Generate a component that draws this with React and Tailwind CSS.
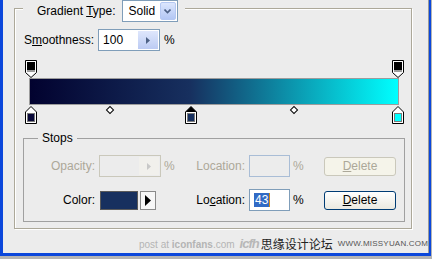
import React from 'react';

const stops = [
    { pos: 0, color: '#0a0a3a' },
    { pos: 43.6, color: '#17305f', selected: true },
    { pos: 100, color: '#00ffff' },
];
const opacityStops = [0, 100];
const midpoints = [21.7, 71.9];

// stop center relative to the editor box
const centerOf = (pct) => 6.5 + (pct / 100) * 367;

function TopStop() {
    return (
        <svg width="12" height="18" viewBox="0 0 12 18">
            <path d="M0.5 0.5H11.5V12.5L6 17.5L0.5 12.5Z" fill="#fff" stroke="#000" />
            <rect x="2" y="2" width="8" height="8" fill="#000" />
            <rect x="2" y="10" width="8" height="2" fill="#9c9c9c" />
        </svg>
    );
}

function BottomStop({ color, selected }) {
    return (
        <svg width="12" height="18" viewBox="0 0 12 18">
            <path d="M6 0.5L11.5 6V17.5H0.5V6Z" fill="#fff" stroke="#000" />
            {selected && <path d="M6 0.5L11.5 6H0.5Z" fill="#000" />}
            <rect x="2.5" y="7.5" width="7" height="8" fill={color} stroke="#7a7a7a" />
        </svg>
    );
}

function Stepper({ disabled }) {
    return (
        <div className={`w-[20px] h-[18px] flex items-center justify-center ${disabled ? 'bg-[#f1f0ec]' : 'bg-gradient-to-b from-[#dfe7fc] to-[#bccbf3]'}`}>
            <svg width="4" height="7" viewBox="0 0 4 7">
                <path d="M0 0L4 3.5L0 7Z" fill={disabled ? '#c8c8c8' : '#4d6185'} />
            </svg>
        </div>
    );
}

function DeleteButton({ disabled }) {
    return (
        <button
            className={`ml-[11px] w-[72px] h-[19px] rounded-[3px] border text-[12px] leading-none flex items-center justify-center
                ${disabled ? 'border-[#cac8bb] bg-[#f5f4ea] text-[#aca899]' : 'border-[#003c74] bg-gradient-to-b from-white to-[#ebe9e0] text-black'}`}
        >
            <span><span className="underline">D</span>elete</span>
        </button>
    );
}

export default function App() {
    return (
        <div className="w-[432px] h-[259px] bg-[#b4b4b4] overflow-hidden font-['Liberation_Sans',sans-serif] text-[12px] text-black">
            <div className="w-[431px] h-[256px] flex border-l-[3px] border-r-[5px] border-b-[3px] border-[#0b47db]">
                <div className="flex-1 bg-[#ececec] border-r border-[#9a9a9a] flex flex-col">

                    {/* Gradient group */}
                    <div className="ml-[11px] mt-[8px] w-[398px] h-[221px] border border-[#aca899] shadow-[inset_1px_1px_0_#fff,1px_1px_0_#fff] flex flex-col">
                        <div className="-mt-[9px] ml-[8px] self-start h-[22px] bg-[#ececec] pl-[14px] pr-[7px] flex items-center">
                            <span>Gradient <span className="underline">T</span>ype:</span>
                            <div className="ml-[6px] w-[56px] h-[22px] border border-[#7f9db9] bg-white flex items-center justify-between pl-[6px] pr-[1px]">
                                <span>Solid</span>
                                <div className="w-[16px] h-[18px] rounded-[2px] border border-[#b5c8f2] bg-gradient-to-b from-[#dce6fd] to-[#b3c7f4] flex items-center justify-center">
                                    <svg width="7" height="5" viewBox="0 0 7 5">
                                        <path d="M0.5 0.5L3.5 3.5L6.5 0.5" fill="none" stroke="#4d6185" strokeWidth="1.6" />
                                    </svg>
                                </div>
                            </div>
                        </div>

                        <div className="mt-[7px] pl-[9px] flex items-center h-[22px]">
                            <span>S<span className="underline">m</span>oothness:</span>
                            <div className="ml-[4px] w-[62px] h-[22px] border border-[#7f9db9] bg-white flex items-center justify-between pl-[4px] pr-[1px]">
                                <span>100</span>
                                <Stepper />
                            </div>
                            <span className="ml-[4px]">%</span>
                        </div>

                        {/* Gradient editor */}
                        <div className="relative mt-[9px] ml-[9px] w-[381px] h-[64px]">
                            {opacityStops.map((p) => (
                                <div key={p} className="absolute top-0" style={{ left: centerOf(p) - 6 }}>
                                    <TopStop />
                                </div>
                            ))}
                            <div className="mt-[18px] ml-[5px] w-[370px] h-[27px] border border-[#9c9c9c] bg-[linear-gradient(to_right,#02022f_0%,#17305f_43.6%,#00ffff_100%)]" />
                            {midpoints.map((p) => (
                                <div
                                    key={p}
                                    className="absolute top-[47px] w-[6px] h-[6px] rotate-45 border border-black bg-white"
                                    style={{ left: centerOf(p) - 3 }}
                                />
                            ))}
                            {stops.map((s) => (
                                <div key={s.pos} className="absolute top-[46px]" style={{ left: centerOf(s.pos) - 6 }}>
                                    <BottomStop color={s.color} selected={s.selected} />
                                </div>
                            ))}
                        </div>

                        {/* Stops group */}
                        <div className="mt-[14px] ml-[8px] w-[382px] h-[84px] border border-[#a0a0a0] flex flex-col">
                            <div className="-mt-[8px] ml-[14px] self-start px-[4px] h-[14px] leading-[14px] bg-[#ececec]">Stops</div>

                            <div className="mt-[10px] h-[22px] flex items-center text-[#aca899]">
                                <span className="w-[71px] text-right">Opacity:</span>
                                <div className="ml-[4px] w-[62px] h-[22px] border border-[#cac8bb] bg-[#ececec] flex items-center justify-end pr-[1px]">
                                    <Stepper disabled />
                                </div>
                                <span className="ml-[3px] w-[20px]">%</span>
                                <span className="w-[61px] text-right">Location:</span>
                                <div className="ml-[4px] w-[41px] h-[22px] border border-[#a9bdd6] bg-[#ececec]" />
                                <span className="ml-[3px] w-[20px]">%</span>
                                <DeleteButton disabled />
                            </div>

                            <div className="mt-[12px] h-[22px] flex items-center">
                                <span className="w-[71px] text-right">Color:</span>
                                <div className="ml-[5px] w-[38px] h-[19px] border border-[#5a5a5a] bg-[#17305f]" />
                                <div className="ml-[2px] w-[16px] h-[19px] border border-[#8a8a8a] bg-[#f7f7f7] flex items-center justify-center">
                                    <svg width="6" height="11" viewBox="0 0 6 11">
                                        <path d="M0 0L6 5.5L0 11Z" fill="#000" />
                                    </svg>
                                </div>
                                <span className="w-[89px] text-right">Lo<span className="underline">c</span>ation:</span>
                                <div className="ml-[4px] w-[41px] h-[22px] border border-[#7f9db9] bg-white flex items-center pl-[4px]">
                                    <span className="bg-[#316ac5] text-white leading-[14px] px-[1px]">43</span>
                                    <span className="w-[1px] h-[14px] bg-[#d08a1c]" />
                                </div>
                                <span className="ml-[3px] w-[20px]">%</span>
                                <DeleteButton />
                            </div>
                        </div>
                    </div>

                    {/* watermark footer */}
                    <div className="mt-[8px] ml-[136px] h-[14px] flex items-center whitespace-nowrap">
                        <span className="text-[10px] text-[#b4b4b4]">post at <b>iconfans</b>.com</span>
                        <span className="ml-[5px] text-[13px] font-bold italic tracking-[-1px] text-[#b8b8b8]">icfh</span>
                        <span className="ml-[2px] text-[12px] text-[#222] font-['Noto_Sans_CJK_SC',sans-serif] leading-[14px]">思缘设计论坛</span>
                        <span className="ml-[5px] text-[8px] text-[#555] tracking-[0.2px]">WWW.MISSYUAN.COM</span>
                    </div>
                </div>
            </div>
        </div>
    );
}
